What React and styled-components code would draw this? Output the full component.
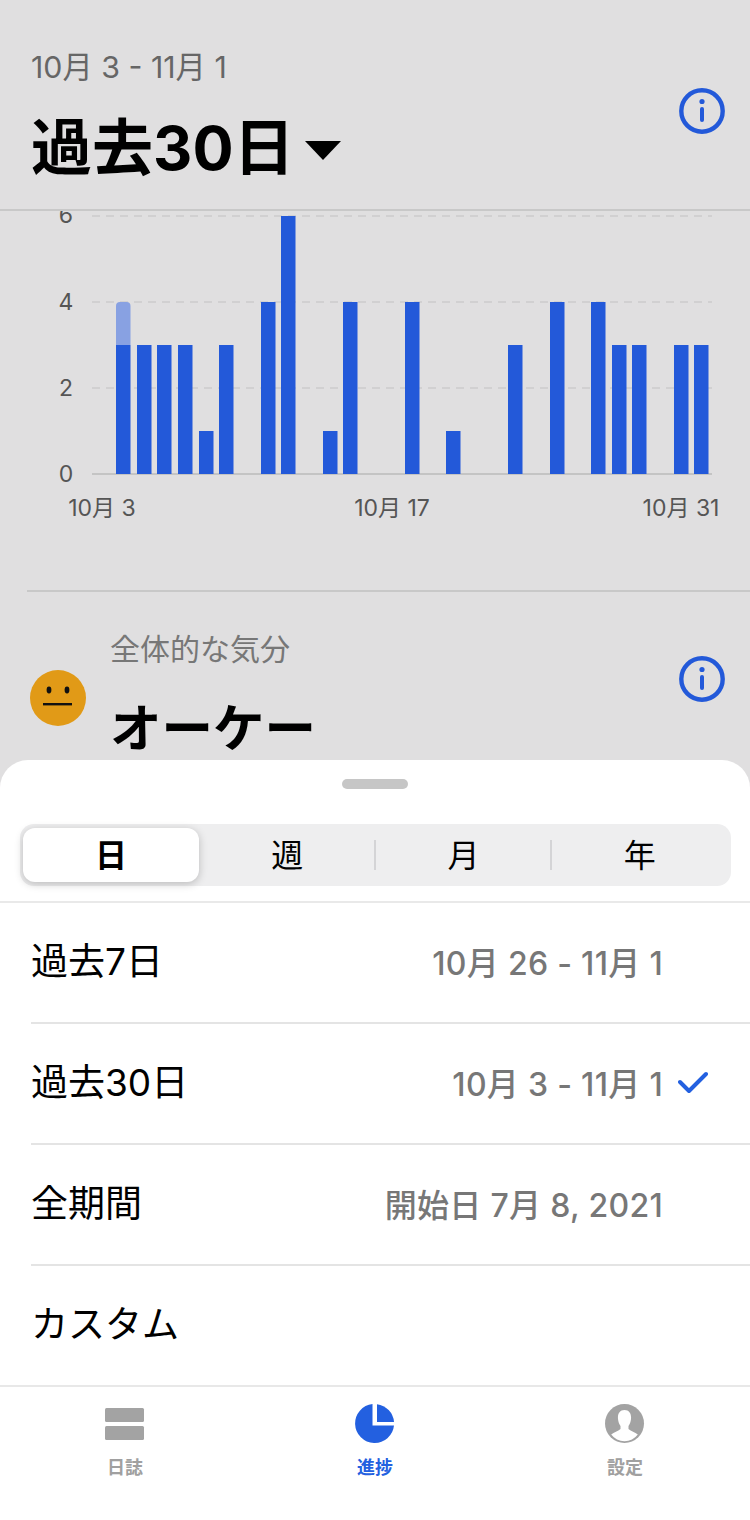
import React from "react";
import styled, { createGlobalStyle } from "styled-components";

const GlobalStyle = createGlobalStyle`
  html, body {
    margin: 0;
    padding: 0;
    background: #e0dfe0;
  }
  * {
    box-sizing: border-box;
  }
  body {
    font-family: Inter, "Noto Sans CJK JP", sans-serif;
  }
`;

const Page = styled.div`
  width: 750px;
  height: 1520px;
  overflow: hidden;
  display: flex;
  flex-direction: column;
`;

const Backdrop = styled.div`
  height: 760px;
  overflow: hidden;
  flex-shrink: 0;
`;

const Header = styled.header`
  height: 211px;
  padding: 46px 25px 0 31px;
  border-bottom: 2px solid #c8c8c8;
  display: flex;
  justify-content: space-between;
  align-items: flex-start;
`;

const DateRange = styled.div`
  font-size: 30.3px;
  line-height: 42px;
  color: #666;
`;

const TitleRow = styled.div`
  display: flex;
  align-items: center;
  margin-top: 22px;
  gap: 10px;
`;

const Title = styled.h1`
  margin: 0;
  font-size: 61px;
  line-height: 76px;
  font-weight: 700;
  color: #000;
`;

const Caret = styled.span`
  width: 0;
  height: 0;
  margin-top: 4px;
  border-left: 18px solid transparent;
  border-right: 18px solid transparent;
  border-top: 19px solid #000;
`;

const InfoWrap = styled.div`
  margin-top: ${(p) => p.$top}px;
  flex-shrink: 0;
`;

const ChartFrame = styled.svg`
  display: block;
  width: 750px;
  height: 379px;
`;

const MoodSection = styled.section`
  margin-left: 27px;
  border-top: 2px solid #c8c8c8;
  padding: 38px 25px 0 3px;
  display: flex;
  align-items: flex-start;
`;

const Face = styled.svg`
  width: 56px;
  height: 56px;
  margin-top: 40px;
  flex-shrink: 0;
`;

const MoodText = styled.div`
  margin-left: 24px;
  flex: 1;
`;

const MoodLabel = styled.div`
  font-size: 30px;
  line-height: 38px;
  color: #777;
`;

const MoodValue = styled.div`
  margin-top: 27px;
  font-size: 51.5px;
  line-height: 66px;
  font-weight: 700;
  color: #000;
`;

const Sheet = styled.div`
  flex: 1;
  background: #fff;
  border-radius: 28px 28px 0 0;
  display: flex;
  flex-direction: column;
`;

const Handle = styled.div`
  width: 66px;
  height: 10px;
  border-radius: 5px;
  background: #c6c6c6;
  margin: 19px auto 0;
`;

const Segments = styled.div`
  margin: 35px 19px 0 20px;
  height: 62px;
  background: #eeeeef;
  border-radius: 14px;
  padding: 4px 3px;
  display: grid;
  grid-template-columns: repeat(4, 1fr);
`;

const Segment = styled.div`
  position: relative;
  display: flex;
  align-items: center;
  justify-content: center;
  padding-bottom: 4px;
  font-size: 32px;
  font-weight: ${(p) => (p.$active ? 700 : 400)};
  color: #000;
  border-radius: 12px;
  background: ${(p) => (p.$active ? "#fff" : "transparent")};
  box-shadow: ${(p) => (p.$active ? "0 2px 8px rgba(0,0,0,0.22)" : "none")};

  &::after {
    content: "";
    display: ${(p) => (p.$divider ? "block" : "none")};
    position: absolute;
    right: 0;
    top: 12px;
    height: 30px;
    border-right: 2px solid #d4d4d6;
  }
`;

const List = styled.div`
  margin-top: 15px;
  border-top: 2px solid #e9e9e9;
`;

const Row = styled.div`
  height: 121px;
  margin-left: 31px;
  padding: 0 87px 7px 0;
  display: flex;
  align-items: center;
  justify-content: space-between;
  border-bottom: 2px solid #e4e4e4;

  &:last-child {
    height: 119px;
    border-bottom: none;
  }
`;

const RowLabel = styled.div`
  font-size: 37px;
  color: #000;
`;

const RowMeta = styled.div`
  display: flex;
  align-items: center;
  margin-top: 4px;
  font-size: 32px;
  font-weight: 500;
  letter-spacing: 0.3px;
  color: #777;
`;

const Check = styled.svg`
  width: 30px;
  height: 24px;
  margin: 2px -45px 0 15px;
`;

const TabBar = styled.nav`
  flex: 1;
  border-top: 2px solid #e8e8e8;
  display: grid;
  grid-template-columns: repeat(3, 1fr);
  padding-top: 17px;
`;

const Tab = styled.div`
  display: flex;
  flex-direction: column;
  align-items: center;
  gap: 13px;
  color: ${(p) => (p.$active ? "#2360e0" : "#a0a0a0")};
  font-size: 18px;
  font-weight: 700;
  line-height: 22px;
`;

const TabIcon = styled.svg`
  width: 40px;
  height: 40px;
  display: block;
`;

const BLUE = "#2359d9";
const bars = [
  [116, 3], [137, 3], [157, 3], [178, 3], [199, 1], [219, 3],
  [261, 4], [281, 6], [323, 1], [343, 4], [405, 4], [446, 1],
  [508, 3], [550, 4], [591, 4], [612, 3], [632, 3], [674, 3], [694, 3],
];

const InfoIcon = () => (
  <svg width="46" height="46" viewBox="0 0 46 46">
    <circle cx="23" cy="23" r="20.7" fill="none" stroke={BLUE} strokeWidth="4.4" />
    <circle cx="23" cy="13.5" r="2.6" fill={BLUE} />
    <rect x="21" y="19" width="4" height="15" rx="2" fill={BLUE} />
  </svg>
);

// the chart starts right under the header line, y = 211 on the page
const Y0 = 474 - 211;
const UNIT = 43;

const Chart = () => (
  <ChartFrame viewBox="0 0 750 379">
    {[2, 4, 6].map((v) => (
      <line
        key={v}
        x1="92"
        x2="712"
        y1={Y0 - v * UNIT}
        y2={Y0 - v * UNIT}
        stroke="#cbcbcb"
        strokeWidth="1.5"
        strokeDasharray="8 6"
      />
    ))}
    <line x1="92" x2="712" y1={Y0} y2={Y0} stroke="#c4c4c4" strokeWidth="2" />
    <path
      d={`M116 ${Y0 - 3 * UNIT} V${Y0 - 4 * UNIT + 4} q0 -4 4 -4 h6.5 q4 0 4 4 V${Y0 - 3 * UNIT} Z`}
      fill="#88a1e2"
    />
    {bars.map(([x, v]) => (
      <rect key={x} x={x} y={Y0 - v * UNIT} width="14.5" height={v * UNIT} fill={BLUE} />
    ))}
    {[0, 2, 4].map((v) => (
      <text key={v} x="66" y={Y0 - v * UNIT + 8} fontSize="23" fill="#555" textAnchor="middle">
        {v}
      </text>
    ))}
    <text x="66" y={Y0 - 6 * UNIT + 7} fontSize="23" fill="#555" textAnchor="middle">6</text>
    <text x="102" y="305" fontSize="23" fill="#555" textAnchor="middle">10月 3</text>
    <text x="392" y="305" fontSize="23" fill="#555" textAnchor="middle">10月 17</text>
    <text x="681" y="305" fontSize="23" fill="#555" textAnchor="middle">10月 31</text>
  </ChartFrame>
);

const rows = [
  { label: "過去7日", meta: "10月 26 - 11月 1" },
  { label: "過去30日", meta: "10月 3 - 11月 1", checked: true },
  { label: "全期間", meta: "開始日 7月 8, 2021" },
  { label: "カスタム" },
];

export default function App() {
  return (
    <>
      <GlobalStyle />
      <Page>
        <Backdrop>
          <Header>
            <div>
              <DateRange>10月 3 - 11月 1</DateRange>
              <TitleRow>
                <Title>過去30日</Title>
                <Caret />
              </TitleRow>
            </div>
            <InfoWrap $top={42}>
              <InfoIcon />
            </InfoWrap>
          </Header>
          <Chart />
          <MoodSection>
            <Face viewBox="0 0 56 56">
              <circle cx="28" cy="28" r="28" fill="#e19a17" />
              <ellipse cx="19" cy="20" rx="2.4" ry="3.4" fill="#111" />
              <ellipse cx="37" cy="20" rx="2.4" ry="3.4" fill="#111" />
              <rect x="13" y="33" width="29" height="2.4" fill="#111" />
            </Face>
            <MoodText>
              <MoodLabel>全体的な気分</MoodLabel>
              <MoodValue>オーケー</MoodValue>
            </MoodText>
            <InfoWrap $top={26}>
              <InfoIcon />
            </InfoWrap>
          </MoodSection>
        </Backdrop>
        <Sheet>
          <Handle />
          <Segments>
            <Segment $active>日</Segment>
            <Segment $divider>週</Segment>
            <Segment $divider>月</Segment>
            <Segment>年</Segment>
          </Segments>
          <List>
            {rows.map((r) => (
              <Row key={r.label}>
                <RowLabel>{r.label}</RowLabel>
                {r.meta && (
                  <RowMeta>
                    {r.meta}
                    {r.checked && (
                      <Check viewBox="0 0 30 24" fill="none" stroke="#2360e0" strokeWidth="4" strokeLinecap="round" strokeLinejoin="round">
                        <path d="M2 11 L11 20 L28 3" />
                      </Check>
                    )}
                  </RowMeta>
                )}
              </Row>
            ))}
          </List>
          <TabBar>
            <Tab>
              <TabIcon viewBox="0 0 40 40">
                <rect x="0" y="4" width="39" height="14" rx="1.5" fill="#a3a3a3" />
                <rect x="0" y="22" width="39" height="14" rx="1.5" fill="#a3a3a3" />
              </TabIcon>
              日誌
            </Tab>
            <Tab $active>
              <TabIcon viewBox="0 0 40 40">
                <path d="M17.5 0.1 A19.5 19.5 0 1 0 39 21.5 H17.5 Z" fill="#2360e0" />
                <path d="M22 0.2 A19.5 19.5 0 0 1 39 18 H22 Z" fill="#2360e0" />
              </TabIcon>
              進捗
            </Tab>
            <Tab>
              <TabIcon viewBox="0 0 40 40">
                <circle cx="19.5" cy="19.5" r="19.5" fill="#a3a3a3" />
                <path
                  d="M19.5 6 C14.5 6 12.5 10 13 15 C13.3 18 14.2 20 15.5 22 V25 C13 27.5 9 28 6.2 30.5 A16.5 16.5 0 0 0 32.8 30.5 C30 28 26 27.5 23.5 25 V22 C24.8 20 25.7 18 26 15 C26.5 10 24.5 6 19.5 6 Z"
                  fill="#fff"
                />
              </TabIcon>
              設定
            </Tab>
          </TabBar>
        </Sheet>
      </Page>
    </>
  );
}
